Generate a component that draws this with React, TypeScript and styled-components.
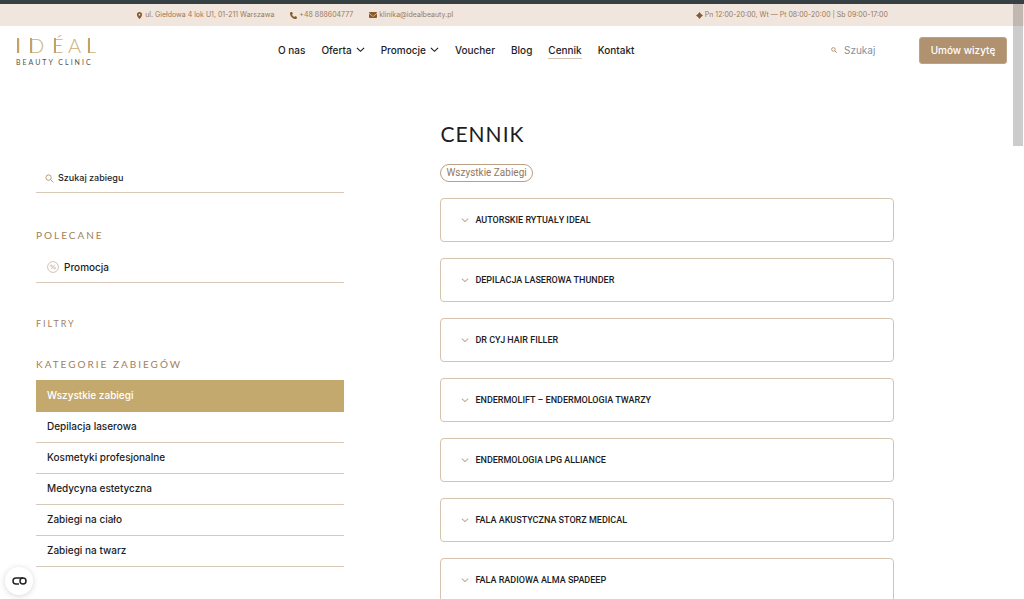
import React from "react";
import styled, { createGlobalStyle } from "styled-components";
import { FaLocationDot, FaPhone, FaEnvelope } from "react-icons/fa6";

const Global = createGlobalStyle`
  *, *::before, *::after { box-sizing: border-box; }
  html { scrollbar-width: none; }
  body { margin: 0; background: #fff; color: #1d1d1f; font-family: Inter, "Open Sans", sans-serif; font-size: 10px; line-height: 16px; }
  button, input { font: inherit; color: inherit; }
  a { color: inherit; text-decoration: none; }
  h1, h2 { margin: 0; font-weight: 400; }
  ul { margin: 0; padding: 0; list-style: none; }
  svg { display: block; flex: none; }
`;

const Page = styled.div`
  height: 100vh;
  overflow: hidden;
`;

const TopBar = styled.div`
  display: flex;
  align-items: center;
  justify-content: space-between;
  height: 26px;
  padding: 0 13.3%;
  border-top: 4px solid #363f42;
  background: #f1e6de;
  color: #9b7a58;
  font-size: 7px;
  line-height: 12px;
  white-space: nowrap;
`;

const Contacts = styled.div`
  display: flex;
  gap: 16px;
`;

const Contact = styled.a`
  display: flex;
  align-items: center;
  gap: 2px;
  svg { color: #8b5a2b; }
`;

const Hours = styled(Contact).attrs({ as: "div" })``;

const Header = styled.header`
  display: flex;
  align-items: center;
  height: 48px;
  padding: 0 17px 0 16px;
  white-space: nowrap;
`;

const Logo = styled.a`
  width: 262px;
  flex: none;
`;

const Nav = styled.nav`
  display: flex;
  gap: 16px;
  font-weight: 500;
`;

const NavLink = styled.a<{ $current?: boolean }>`
  display: flex;
  align-items: center;
  gap: 4px;
  border-bottom: 1px solid ${(p) => (p.$current ? "#d5c3b0" : "transparent")};
`;

const HeaderSearch = styled.label`
  display: flex;
  align-items: center;
  gap: 7px;
  margin-left: auto;
  color: #b09270;
`;

const HeaderInput = styled.input`
  width: 75px;
  padding: 0;
  border: 0;
  outline: 0;
  background: none;
  &::placeholder { color: #87919b; opacity: 1; }
`;

const BookButton = styled.button`
  height: 27px;
  width: 88px;
  padding: 0;
  border: 1px solid #bda285;
  border-radius: 3px;
  background: #b09270;
  color: #fff;
  font-weight: 500;
`;

const Content = styled.div`
  display: grid;
  grid-template-columns: minmax(0, 34fr) minmax(0, 50fr);
  gap: 96px;
  padding: 0 12.7% 0 36px;
`;

const Sidebar = styled.aside`
  padding-top: 90px;
  font-weight: 500;
`;

const SideSearch = styled.label`
  display: flex;
  align-items: center;
  gap: 4px;
  height: 29px;
  padding-left: 9px;
  border-bottom: 1px solid #d9c9b8;
  color: #b09270;
  font-size: 9px;
`;

const SideInput = styled.input`
  flex: 1;
  min-width: 0;
  padding: 0;
  border: 0;
  outline: 0;
  background: none;
  &::placeholder { color: #1d1d1f; opacity: 1; }
`;

const SideTitle = styled.h2<{ $small?: boolean }>`
  color: #a07f5c;
  font-family: Lato, sans-serif;
  font-size: ${(p) => (p.$small ? 9 : 10)}px;
  line-height: 16px;
  letter-spacing: 2px;
`;

const Featured = styled.section`
  margin: 34px 0 33px;
`;

const Promo = styled.a`
  display: flex;
  align-items: center;
  gap: 5px;
  height: 32px;
  margin-top: 8px;
  padding-left: 11px;
  border-bottom: 1px solid #d9c9b8;
`;

const Categories = styled.section`
  margin-top: 24px;
  ul { margin-top: 8px; }
`;

const Category = styled.a<{ $selected?: boolean }>`
  display: flex;
  align-items: center;
  height: ${(p) => (p.$selected ? 32 : 31)}px;
  padding: 0 11px 2px;
  border-bottom: 1px solid ${(p) => (p.$selected ? "#c4a96f" : "#d9c9b8")};
  background: ${(p) => (p.$selected ? "#c4a96f" : "transparent")};
  color: ${(p) => (p.$selected ? "#fff" : "inherit")};
`;

const Main = styled.main`
  padding-top: 46px;
`;

const Title = styled.h1`
  font-family: Lato, sans-serif;
  font-size: 21px;
  line-height: 28px;
  letter-spacing: 1px;
`;

const Tag = styled.button`
  display: block;
  height: 18px;
  margin: 16px 0;
  padding: 0 5px;
  border: 1px solid #b99f85;
  border-radius: 9px;
  background: none;
  color: #957758;
  font-family: Roboto, sans-serif;
  line-height: 16px;
`;

const Treatments = styled.ul`
  display: grid;
  gap: 16px;
`;

const Treatment = styled.button`
  display: flex;
  align-items: center;
  gap: 6px;
  width: 100%;
  height: 44px;
  padding: 0 20px;
  border: 1px solid #d5c3b0;
  border-radius: 4px;
  background: none;
  font-family: Roboto, sans-serif;
  font-size: 9px;
  font-weight: 500;
  text-align: left;
`;

const ScrollThumb = styled.div`
  position: fixed;
  top: 4px;
  right: 1px;
  width: 10px;
  height: 142px;
  background: rgba(0, 0, 0, 0.2);
`;

const CookieButton = styled.button`
  position: fixed;
  left: 5px;
  bottom: 4px;
  display: grid;
  place-items: center;
  width: 28px;
  height: 28px;
  padding: 0;
  border: 0;
  border-radius: 50%;
  background: #fff;
  box-shadow: 0 1px 6px rgba(0, 0, 0, 0.16);
`;

const Chevron = ({ size = 9, color = "currentColor", weight = 1.3 }) => (
  <svg width={size} height={size} viewBox="0 0 10 10" fill="none" stroke={color} strokeWidth={weight} aria-hidden="true">
    <path d="M1 3.2 5 7 9 3.2" />
  </svg>
);

const Magnifier = ({ size = 9, weight = 1 }) => (
  <svg width={size} height={size} viewBox="0 0 10 10" fill="none" stroke="currentColor" strokeWidth={weight} aria-hidden="true">
    <circle cx="4" cy="4" r="3" />
    <path d="M6.2 6.2 9.4 9.4" />
  </svg>
);

const LogoArt = () => (
  <svg width="84" height="44" viewBox="0 0 84 44" role="img" aria-label="Idéal Beauty Clinic">
    <g fill="#cdb07a" fontFamily="Lato, sans-serif" fontSize="20" fontWeight="300">
      <text x="0" y="25">I</text>
      <text x="13" y="25">D</text>
      <text x="36" y="25">É</text>
      <text x="52" y="25">A</text>
      <text x="70" y="25">L</text>
    </g>
    <path fill="#c4a265" d="M1 10H3V25H1zM14 10H16V25H14zM38 10H40V25H38zM72 10H74V25H72z" />
    <text x="0" y="37" fill="#55524f" fontFamily="Lato, sans-serif" fontSize="7" letterSpacing="2">BEAUTY CLINIC</text>
  </svg>
);

const nav = [
  { label: "O nas" },
  { label: "Oferta", menu: true },
  { label: "Promocje", menu: true },
  { label: "Voucher" },
  { label: "Blog" },
  { label: "Cennik", current: true },
  { label: "Kontakt" },
];

const categories = [
  "Wszystkie zabiegi",
  "Depilacja laserowa",
  "Kosmetyki profesjonalne",
  "Medycyna estetyczna",
  "Zabiegi na ciało",
  "Zabiegi na twarz",
];

const treatments = [
  "AUTORSKIE RYTUAŁY IDEAL",
  "DEPILACJA LASEROWA THUNDER",
  "DR CYJ HAIR FILLER",
  "ENDERMOLIFT – ENDERMOLOGIA TWARZY",
  "ENDERMOLOGIA LPG ALLIANCE",
  "FALA AKUSTYCZNA STORZ MEDICAL",
  "FALA RADIOWA ALMA SPADEEP",
];

export default function App() {
  return (
    <Page>
      <Global />
      <TopBar>
        <Contacts>
          <Contact href="#mapa"><FaLocationDot size={7} />ul. Giełdowa 4 lok U1, 01-211 Warszawa</Contact>
          <Contact href="tel:+48888604777"><FaPhone size={7} />+48 888604777</Contact>
          <Contact href="mailto:klinika@idealbeauty.pl"><FaEnvelope size={8} />klinika@idealbeauty.pl</Contact>
        </Contacts>
        <Hours>
          <svg width="7" height="7" viewBox="0 0 8 8" fill="currentColor" aria-hidden="true">
            <path d="M4 0 5.8 2.2 8 4 5.8 5.8 4 8 2.2 5.8 0 4 2.2 2.2z" />
          </svg>
          Pn 12:00-20:00, Wt — Pt 08:00-20:00 | Sb 09:00-17:00
        </Hours>
      </TopBar>
      <Header>
        <Logo href="#start"><LogoArt /></Logo>
        <Nav>
          {nav.map((item) => (
            <NavLink key={item.label} href="#menu" $current={item.current}>
              {item.label}
              {item.menu && <Chevron size={9} />}
            </NavLink>
          ))}
        </Nav>
        <HeaderSearch>
          <Magnifier size={6} weight={1.6} />
          <HeaderInput type="text" placeholder="Szukaj" aria-label="Szukaj" />
        </HeaderSearch>
        <BookButton>Umów wizytę</BookButton>
      </Header>
      <Content>
        <Sidebar>
          <SideSearch>
            <Magnifier size={9} />
            <SideInput type="text" placeholder="Szukaj zabiegu" aria-label="Szukaj zabiegu" />
          </SideSearch>
          <Featured>
            <SideTitle>POLECANE</SideTitle>
            <Promo href="#promocja">
              <svg width="12" height="12" viewBox="0 0 12 12" fill="none" stroke="#c9b29a" strokeWidth="0.8" aria-hidden="true">
                <circle cx="6" cy="6" r="5.4" />
                <circle cx="4.4" cy="4.8" r="0.9" />
                <circle cx="7.6" cy="7.2" r="0.9" />
                <path d="M7.8 3.8 4.2 8.2" />
              </svg>
              Promocja
            </Promo>
          </Featured>
          <SideTitle $small>FILTRY</SideTitle>
          <Categories>
            <SideTitle>KATEGORIE ZABIEGÓW</SideTitle>
            <ul>
              {categories.map((name, i) => (
                <li key={name}><Category href="#kategoria" $selected={i === 0}>{name}</Category></li>
              ))}
            </ul>
          </Categories>
        </Sidebar>
        <Main>
          <Title>CENNIK</Title>
          <Tag>Wszystkie Zabiegi</Tag>
          <Treatments>
            {treatments.map((name) => (
              <li key={name}>
                <Treatment aria-expanded="false"><Chevron size={8} color="#c2a88c" />{name}</Treatment>
              </li>
            ))}
          </Treatments>
        </Main>
      </Content>
      <ScrollThumb />
      <CookieButton aria-label="Ustawienia plików cookie">
        <svg width="15" height="8" viewBox="0 0 15 8" fill="none" stroke="#222" strokeWidth="1.5" aria-hidden="true">
          <path d="M8 1H4a3 3 0 0 0 0 6h3" />
          <circle cx="11" cy="4" r="3" />
          <path d="M8 1h3" />
        </svg>
      </CookieButton>
    </Page>
  );
}
